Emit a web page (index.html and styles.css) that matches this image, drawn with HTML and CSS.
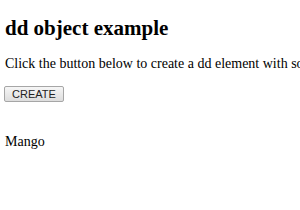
FILE: index.html
```html
<!DOCTYPE html>
<html>
<head>
<meta charset="utf-8">
<link rel="stylesheet" href="styles.css">
</head>
<body class="page">
<h2 class="title">dd object example</h2>
<p class="intro">Click the button below to create a dd element with some text.</p>
<button class="btn">CREATE</button>
<dl class="list"><dd class="item">Mango</dd></dl>
</body>
</html>
```
FILE: styles.css
```css
html, body { margin: 0; padding: 0; }
.page {
  padding: 0 5px;
  font-family: "Liberation Serif", "Times New Roman", serif;
  font-size: 14px;
  color: #000;
  background: #fff;
  white-space: nowrap;
  overflow: hidden;
  width: 300px;
  height: 210px;
  box-sizing: border-box;
}
.title {
  font-size: 21px;
  font-weight: bold;
  margin: 0;
  padding-top: 16px;
  line-height: 24px;
}
.intro {
  margin: 0;
  padding-top: 16px;
  line-height: 16px;
}
.btn {
  display: block;
  margin: 14px 0 0 -1px;
  height: 16px;
  width: 60px;
  padding: 0;
  font-family: "Liberation Sans", Arial, sans-serif;
  font-size: 11px;
  line-height: 14px;
  color: #222;
  background: linear-gradient(#f6f6f6, #dddddd);
  border: 1px solid #a6a6a6;
  border-radius: 2px;
}
.list { margin: 0; padding-top: 32px; }
.item { margin: 0; line-height: 16px; }
```
